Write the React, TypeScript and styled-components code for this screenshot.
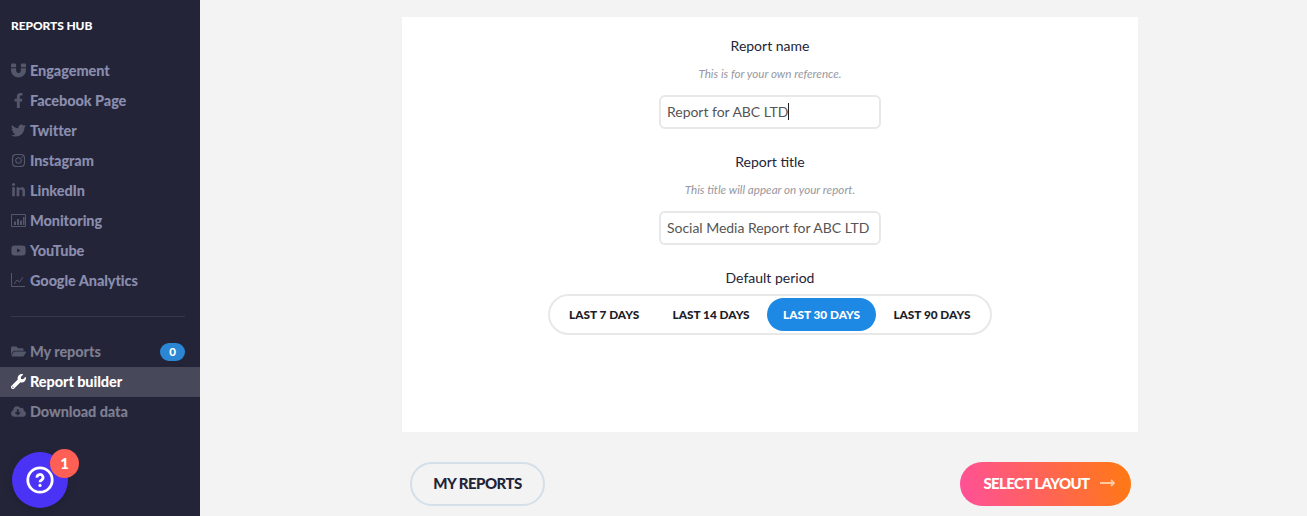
import React from 'react';

import styled, { createGlobalStyle } from 'styled-components';
import {
    FaMagnet,
    FaFacebookF,
    FaTwitter,
    FaInstagram,
    FaLinkedinIn,
    FaYoutube,
    FaFolderOpen,
    FaWrench,
    FaCloudDownloadAlt,
} from 'react-icons/fa';

const GlobalStyle = createGlobalStyle`
    html, body {
        margin: 0;
        padding: 0;
        height: 516px;
        overflow: hidden;
        background: #f3f3f3;
        font-family: Lato, "Liberation Sans", sans-serif;
    }
`;

const Page = styled.div`
    display: flex;
    height: 516px;
    position: relative;
`;

const Sidebar = styled.aside`
    width: 200px;
    flex-shrink: 0;
    background: #232438;
    display: flex;
    flex-direction: column;
`;

const Brand = styled.div`
    color: #fff;
    font-size: 12px;
    font-weight: 900;
    line-height: 16px;
    letter-spacing: -0.1px;
    padding: 18px 11px 0;
    margin-bottom: 21px;
`;

const NavList = styled.nav`
    display: flex;
    flex-direction: column;
`;

const NavItem = styled.div<{ $active?: boolean; $muted?: boolean }>`
    display: flex;
    align-items: center;
    height: 30px;
    padding: 0 15px 0 11px;
    font-size: 14.5px;
    font-weight: 900;
    letter-spacing: -0.08px;
    color: ${(p) => (p.$active ? '#fff' : p.$muted ? '#7d7e90' : '#8a8dae')};
    background: ${(p) => (p.$active ? '#47485a' : 'transparent')};
`;

const ToolItem = styled(NavItem)`
    box-sizing: border-box;
    padding-bottom: 2px;
`;

const NavIcon = styled.span<{ $active?: boolean }>`
    width: 19px;
    display: flex;
    justify-content: flex-start;
    flex-shrink: 0;
    font-size: 15px;
    color: ${(p) => (p.$active ? '#fff' : '#54566a')};
`;

const Divider = styled.div`
    height: 1px;
    background: #37384b;
    margin: 21px 15px 20px 11px;
`;

const Count = styled.span`
    margin: 2px 0 0 auto;
    width: 25px;
    height: 18px;
    border-radius: 9px;
    background: #2b87d3;
    color: #fff;
    font-size: 11.5px;
    font-weight: 900;
    letter-spacing: 0;
    text-align: center;
    line-height: 18px;
`;

const HelpButton = styled.div`
    position: absolute;
    left: 12px;
    top: 452px;
    width: 56px;
    height: 56px;
    border-radius: 50%;
    background: #4a33f5;
    box-shadow: 0 2px 8px rgba(0, 0, 0, 0.12);
    display: flex;
    align-items: center;
    justify-content: center;
`;

const HelpBadge = styled.span`
    position: absolute;
    left: 38px;
    top: -3px;
    width: 29px;
    height: 29px;
    border-radius: 50%;
    background: #ff5f55;
    color: #fff;
    font-size: 15px;
    font-weight: 900;
    text-align: center;
    line-height: 29px;
`;

const Main = styled.main`
    flex: 1;
    padding: 17px 0 0 202px;
`;

const Column = styled.div`
    width: 736px;
`;

const Card = styled.section`
    height: 415px;
    background: #fff;
    display: flex;
    flex-direction: column;
    align-items: center;
    padding-top: 20px;
    box-sizing: border-box;
    color: #232438;
`;

const FieldLabel = styled.div`
    font-size: 14px;
    line-height: 18px;
`;

const Hint = styled.div`
    font-size: 11.65px;
    font-style: italic;
    line-height: 14px;
    color: #98989f;
    margin-top: 12px;
`;

const TextInput = styled.div`
    width: 222px;
    height: 34px;
    box-sizing: border-box;
    border: 2px solid #e8e8e8;
    border-radius: 6px;
    margin: 14px 0 24px;
    padding: 0 6px 2px;
    display: flex;
    align-items: center;
    font-size: 14px;
    letter-spacing: -0.03px;
    color: #555;
    white-space: nowrap;
`;

const Caret = styled.span`
    display: inline-block;
    width: 1px;
    height: 17px;
    background: #222;
`;

const PeriodLabel = styled(FieldLabel)`
    margin-bottom: 7px;
`;

const PeriodGroup = styled.div`
    display: flex;
    align-items: center;
    gap: 1.4px;
    width: 444px;
    height: 41px;
    box-sizing: border-box;
    border: 2px solid #e8e8e8;
    border-radius: 21px;
    padding: 0 3px;
`;

const PeriodOption = styled.div<{ $active?: boolean }>`
    height: 33px;
    padding: 0 16px;
    border-radius: 17px;
    display: flex;
    align-items: center;
    justify-content: center;
    font-size: 11.8px;
    font-weight: 900;
    white-space: nowrap;
    color: ${(p) => (p.$active ? '#fff' : '#1c1c28')};
    background: ${(p) => (p.$active ? '#1e88e5' : 'transparent')};
`;

const Footer = styled.div`
    display: flex;
    justify-content: space-between;
    padding: 30px 7px 0 8px;
`;

const GhostButton = styled.div`
    width: 135px;
    height: 44px;
    box-sizing: border-box;
    border: 2px solid #d3dfe9;
    border-radius: 22px;
    padding-bottom: 2px;
    display: flex;
    align-items: center;
    justify-content: center;
    font-size: 15px;
    font-weight: 900;
    letter-spacing: -0.55px;
    color: #232438;
`;

const PrimaryButton = styled.div`
    width: 171px;
    height: 44px;
    box-sizing: border-box;
    border-radius: 22px;
    padding: 0 0 2px 7px;
    background: linear-gradient(75deg, #ff4f9a 0%, #ff7a10 100%);
    display: flex;
    align-items: center;
    justify-content: center;
    gap: 10px;
    font-size: 15px;
    font-weight: 900;
    letter-spacing: -0.6px;
    color: #fff;
`;

const MonitorIcon = () => (
    <svg width="15" height="13" viewBox="0 0 15 13" fill="currentColor">
        <path d="M.5.5h14v12H.5z" fill="none" stroke="currentColor" />
        <path d="M3 7.5h2V11H3zM6 5h2v6H6zM9 6.5h2V11H9zM12 3h1.5v8H12z" />
    </svg>
);

const ChartLineIcon = () => (
    <svg width="14" height="14" viewBox="0 0 14 14" fill="none" stroke="currentColor">
        <path d="M.5 0v13.5H14" />
        <path d="M3 11l3-4 2.5 2 3.5-5" />
    </svg>
);

const HelpIcon = () => (
    <svg width="28" height="28" viewBox="0 0 28 28" fill="none">
        <circle cx="14" cy="14" r="12.2" stroke="#fff" strokeWidth="2.8" />
        <path d="M11 11.6a3 3 0 1 1 4.6 2.4c-1 .6-1.6 1.1-1.6 2.2" stroke="#fff" strokeWidth="2.8" fill="none" />
        <circle cx="14" cy="19.4" r="1.6" fill="#fff" />
    </svg>
);

const ArrowIcon = () => (
    <svg width="15" height="8" viewBox="0 0 15 8" fill="none" stroke="#ffc9a0" strokeWidth="1.8">
        <path d="M0 4h14M11 1l3 3-3 3" />
    </svg>
);

const channels = [
    { label: 'Engagement', icon: <FaMagnet /> },
    { label: 'Facebook Page', icon: <FaFacebookF /> },
    { label: 'Twitter', icon: <FaTwitter /> },
    { label: 'Instagram', icon: <FaInstagram /> },
    { label: 'LinkedIn', icon: <FaLinkedinIn /> },
    { label: 'Monitoring', icon: <MonitorIcon /> },
    { label: 'YouTube', icon: <FaYoutube /> },
    { label: 'Google Analytics', icon: <ChartLineIcon /> },
];

const periods = ['LAST 7 DAYS', 'LAST 14 DAYS', 'LAST 30 DAYS', 'LAST 90 DAYS'];

export default function App() {
    return (
        <Page>
            <GlobalStyle />
            <Sidebar>
                <Brand>REPORTS HUB</Brand>
                <NavList>
                    {channels.map((c) => (
                        <NavItem key={c.label}>
                            <NavIcon>{c.icon}</NavIcon>
                            {c.label}
                        </NavItem>
                    ))}
                </NavList>
                <Divider />
                <NavList>
                    <ToolItem $muted>
                        <NavIcon><FaFolderOpen /></NavIcon>
                        My reports
                        <Count>0</Count>
                    </ToolItem>
                    <ToolItem $active>
                        <NavIcon $active><FaWrench /></NavIcon>
                        Report builder
                    </ToolItem>
                    <ToolItem $muted>
                        <NavIcon><FaCloudDownloadAlt /></NavIcon>
                        Download data
                    </ToolItem>
                </NavList>
            </Sidebar>
            <HelpButton>
                <HelpIcon />
                <HelpBadge>1</HelpBadge>
            </HelpButton>
            <Main>
                <Column>
                    <Card>
                        <FieldLabel>Report name</FieldLabel>
                        <Hint>This is for your own reference.</Hint>
                        <TextInput>Report for ABC LTD<Caret /></TextInput>
                        <FieldLabel>Report title</FieldLabel>
                        <Hint>This title will appear on your report.</Hint>
                        <TextInput>Social Media Report for ABC LTD</TextInput>
                        <PeriodLabel>Default period</PeriodLabel>
                        <PeriodGroup>
                            {periods.map((p) => (
                                <PeriodOption key={p} $active={p === 'LAST 30 DAYS'}>{p}</PeriodOption>
                            ))}
                        </PeriodGroup>
                    </Card>
                    <Footer>
                        <GhostButton>MY REPORTS</GhostButton>
                        <PrimaryButton>SELECT LAYOUT<ArrowIcon /></PrimaryButton>
                    </Footer>
                </Column>
            </Main>
        </Page>
    );
}
